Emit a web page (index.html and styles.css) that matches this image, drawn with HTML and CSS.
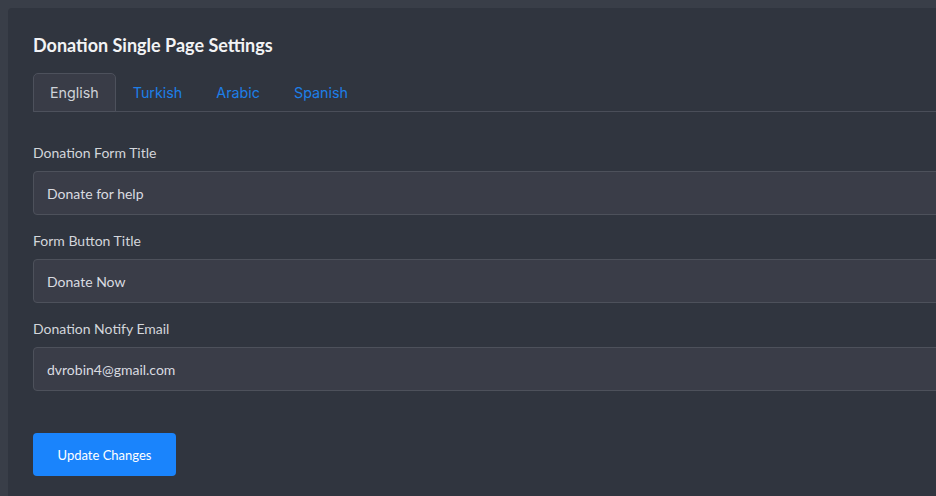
FILE: index.html
```html
<!DOCTYPE html>
<html lang="en">
<head>
  <meta charset="UTF-8" />
  <meta name="viewport" content="width=device-width, initial-scale=1.0"/>
  <title>Donation Single Page Settings</title>
  <link rel="stylesheet" href="styles.css">
</head>
<body>
  <div class="card">
    <h4 class="card-title">Donation Single Page Settings</h4>

    <ul class="tabs">
      <li class="tab active">English</li>
      <li class="tab">Turkish</li>
      <li class="tab">Arabic</li>
      <li class="tab">Spanish</li>
    </ul>

    <form>
      <div class="field">
        <label for="form_title">Donation Form Title</label>
        <input type="text" id="form_title" name="form_title" value="Donate for help"/>
      </div>

      <div class="field">
        <label for="button_title">Form Button Title</label>
        <input type="text" id="button_title" name="button_title" value="Donate Now"/>
      </div>

      <div class="field">
        <label for="notify_email">Donation Notify Email</label>
        <input type="email" id="notify_email" name="notify_email" value="dvrobin4@gmail.com"/>
      </div>

      <button type="submit">Update Changes</button>
    </form>
  </div>
</body>
</html>
```

FILE: styles.css
```css
html, body {
  margin: 0;
  padding: 0;
  height: 100%;
  overflow: hidden;
  font-family: Lato, "Open Sans", sans-serif;
  background-color: #393e48;
}

body {
  padding: 8px 0 0 8px;
  box-sizing: border-box;
}

.card {
  width: 1200px;
  min-height: 600px;
  background-color: #30353f;
  border-radius: 4px;
  padding: 26px 25px;
  box-sizing: border-box;
}

.card-title {
  margin: 0 0 17px;
  font-size: 18px;
  font-weight: 700;
  line-height: 22px;
  color: #f2f3f5;
}

.tabs {
  display: flex;
  margin: 0;
  padding: 0;
  list-style: none;
  border-bottom: 1px solid #4a4e59;
}

.tab {
  padding: 8px 16px;
  margin-bottom: -1px;
  font-family: Inter, "Open Sans", sans-serif;
  font-size: 14.3px;
  line-height: 21px;
  color: #1d7fe8;
  border: 1px solid transparent;
  border-radius: 5px 5px 0 0;
}

.tab.active {
  color: #cfd2d8;
  background-color: #393c47;
  border-color: #4d515c;
}

form {
  padding-top: 30px;
}

.field {
  margin-bottom: 15px;
}

label {
  display: block;
  margin-bottom: 7px;
  font-size: 14px;
  line-height: 22px;
  color: #d3d6db;
}

input {
  display: block;
  width: 100%;
  height: 44px;
  padding: 0 13px;
  font-family: Lato, sans-serif;
  font-size: 14px;
  color: #d9dbe0;
  background-color: #3a3d48;
  border: 1px solid #4d515b;
  border-radius: 4px;
  box-sizing: border-box;
  outline: none;
}

button {
  margin-top: 27px;
  width: 143px;
  height: 43px;
  font-family: Lato, sans-serif;
  font-size: 13px;
  color: #ffffff;
  background-color: #1a84fc;
  border: none;
  border-radius: 4px;
  cursor: pointer;
}
```
